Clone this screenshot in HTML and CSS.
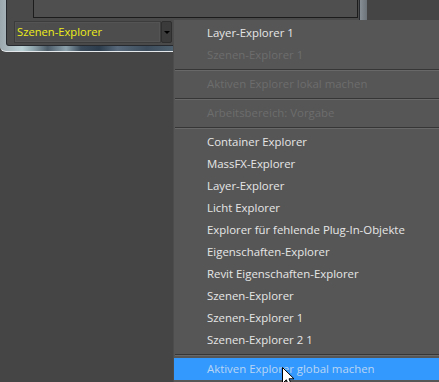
FILE: index.html
```html
<!DOCTYPE html>
<html lang="de">
<head>
  <meta charset="UTF-8">
  <title>Szenen-Explorer</title>
  <link rel="stylesheet" href="styles.css">
</head>
<body>
  <div class="stage">
    <!-- Panel frame with explorer selector -->
    <div class="frame">
      <div class="frame-inner">
        <div class="list-box"></div>
        <div class="combo">
          <div class="combo-field">Szenen-Explorer</div>
          <div class="combo-btn"><span class="tri"></span></div>
        </div>
      </div>
    </div>

    <!-- Open dropdown menu -->
    <ul class="menu">
      <li class="item">Layer-Explorer 1</li>
      <li class="item disabled">Szenen-Explorer 1</li>
      <li class="sep"></li>
      <li class="item disabled">Aktiven Explorer lokal machen</li>
      <li class="sep"></li>
      <li class="item disabled">Arbeitsbereich: Vorgabe</li>
      <li class="sep"></li>
      <li class="item">Container Explorer</li>
      <li class="item">MassFX-Explorer</li>
      <li class="item">Layer-Explorer</li>
      <li class="item">Licht Explorer</li>
      <li class="item">Explorer für fehlende Plug-In-Objekte</li>
      <li class="item">Eigenschaften-Explorer</li>
      <li class="item">Revit Eigenschaften-Explorer</li>
      <li class="item">Szenen-Explorer</li>
      <li class="item">Szenen-Explorer 1</li>
      <li class="item">Szenen-Explorer 2 1</li>
      <li class="sep"></li>
      <li class="item active">Aktiven Explorer global machen</li>
    </ul>

    <svg class="cursor" width="14" height="22" viewBox="0 0 14 22">
      <path d="M0.5 0.5 L0.5 16.5 L4.3 12.8 L7 19 L9.6 17.9 L7 11.8 L12 11.8 Z" fill="#fff" stroke="#000" stroke-width="1" stroke-linejoin="miter"/>
    </svg>
  </div>
</body>
</html>
```

FILE: styles.css
```css
:root {
  --bg: #454545;
  --panel: #4a4a4a;
  --menu-bg: #565656;
  --text: #e6e6e6;
  --text-off: #6d6d6d;
  --hilite: #3399ff;
}

* {
  margin: 0;
  padding: 0;
  box-sizing: border-box;
}

body {
  background: var(--bg);
  font-family: "Open Sans", "Noto Sans", sans-serif;
  font-size: 11.4px;
  overflow: hidden;
}

.stage {
  position: relative;
  width: 439px;
  height: 382px;
}

/* Chrome-looking frame around the panel */
.frame {
  width: 367px;
  padding: 0 7px 5px 6px;
  background: linear-gradient(90deg, #9ba9af 0%, #a8b6bb 2%, #b9d0d5 6%, #8fa5ad 9%, #4b5b67 13%, #8ba1ab 18%, #3a4a5a 22%, #2c3c4c 27%, #56687a 32%, #3c4c5c 40%, #6d808c 60%, #3c4c5a 80%, #a5adb4 96%, #6c747a 100%);
  border-bottom: 1px solid #e4e8ea;
  border-bottom-left-radius: 6px;
}

.frame-inner {
  height: 46px;
  padding: 0 1px 0 26px;
  background: var(--panel);
  border: 1px solid #262a2e;
  border-top: none;
  border-bottom-left-radius: 3px;
}

.list-box {
  height: 18px;
  background: #4f4f4f;
  border: 1px solid #1c1c1c;
  border-top: none;
}

.combo {
  display: flex;
  margin: 3px 0 0 -19px;
  width: 158px;
  height: 22px;
}

.combo-field {
  flex: 1;
  padding-left: 2px;
  line-height: 20px;
  color: #eeee1a;
  background: #4d4d4d;
  border: 1px solid #3c3c3c;
  box-shadow: inset 0 0 0 1px #545454;
  font-size: 11.2px;
}

.combo-btn {
  width: 11px;
  display: flex;
  align-items: center;
  justify-content: center;
  background: #3b3b3b;
  border: 1px solid #2e2e2e;
  border-radius: 2px;
}

.tri {
  width: 0;
  height: 0;
  border-left: 3px solid transparent;
  border-right: 3px solid transparent;
  border-top: 3px solid #000;
  margin-top: 1px;
}

/* Dropdown menu */
.menu {
  position: absolute;
  left: 173px;
  top: 20px;
  width: 266px;
  height: 370px;
  list-style: none;
  padding-top: 2px;
  background: var(--menu-bg);
  border-left: 1px solid #4c4c4c;
}

.item {
  height: 22px;
  line-height: 22px;
  padding-left: 33px;
  color: var(--text);
  white-space: nowrap;
}

.item.disabled {
  color: var(--text-off);
}

.item.active {
  background: var(--hilite);
  color: #b9d5f3;
}

.sep {
  height: 7px;
  padding-top: 3px;
  margin-left: 1px;
}

.sep::before {
  content: "";
  display: block;
  border-top: 1px solid #363636;
  border-bottom: 1px solid #686868;
}

.cursor {
  position: absolute;
  left: 282px;
  top: 367px;
}
```
